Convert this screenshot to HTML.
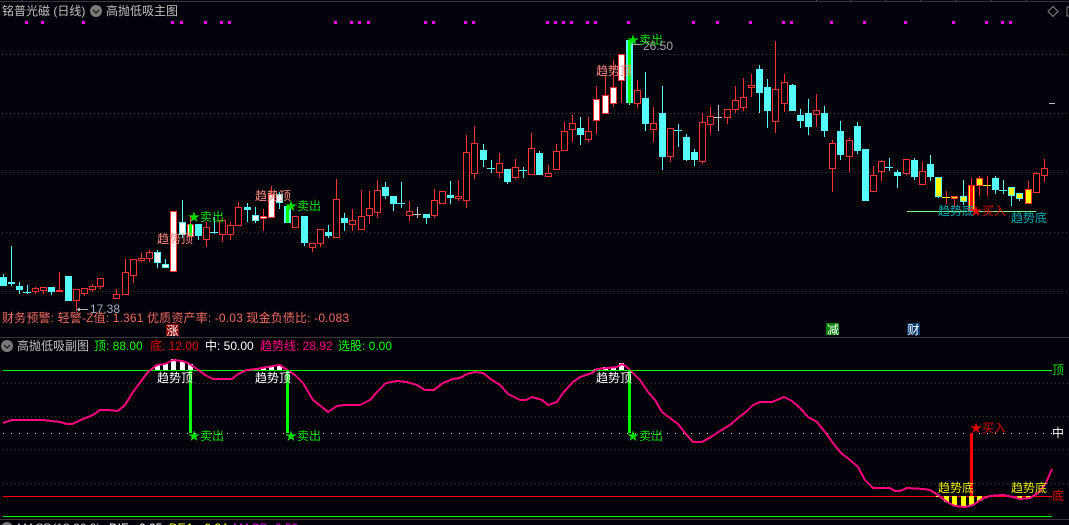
<!DOCTYPE html>
<html><head><meta charset="utf-8"><style>
html,body{margin:0;padding:0;background:#02020a;width:1069px;height:525px;overflow:hidden}
svg{display:block}
text{font-family:"Liberation Sans","WenQuanYi Zen Hei","Noto Sans CJK SC",sans-serif;font-size:12px;white-space:pre}
.c path,.c rect,.c line{shape-rendering:crispEdges}
</style></head><body>
<svg width="1069" height="525" viewBox="0 0 1069 525" xmlns="http://www.w3.org/2000/svg">
<rect width="1069" height="525" fill="#02020a"/>
<g class="c">
<path d="M0 1.500H1069M0 337.500H1069M0 519.500H1069" stroke="#37373c" fill="none"/>
<path d="M22 0v1M816.500 0v1M851 0v1M886 0v1M921 0v1M956 0v1M991 0v1M1026 0v1" stroke="#555"/>
<path d="M2 54.500H1069M2 113.500H1069M2 172.500H1069M2 232.500H1069M2 291.500H1069M3 383.500H1069M3 416.500H1069M3 449.500H1069M3 483.500H1069" stroke="#3a3a3a" stroke-dasharray="1 3" fill="none"/>
<path d="M3 433.500H1052" stroke="#e8e8e8" stroke-dasharray="1 7" fill="none"/>
<path fill="#ff00ff" d="M25 21h3v3h-3zM41 21h3v3h-3zM82 21h3v3h-3zM171 21h3v3h-3zM180 21h3v3h-3zM204 21h3v3h-3zM220 21h3v3h-3zM228 21h3v3h-3zM334 21h3v3h-3zM350 21h3v3h-3zM358 21h3v3h-3zM367 21h3v3h-3zM424 21h3v3h-3zM432 21h3v3h-3zM464 21h3v3h-3zM472 21h3v3h-3zM546 21h3v3h-3zM554 21h3v3h-3zM562 21h3v3h-3zM570 21h3v3h-3zM586 21h3v3h-3zM594 21h3v3h-3zM627 21h3v3h-3zM692 21h3v3h-3zM716 21h3v3h-3zM749 21h3v3h-3zM782 21h3v3h-3zM790 21h3v3h-3zM830 21h3v3h-3zM863 21h3v3h-3zM904 21h3v3h-3zM952 21h3v3h-3zM985 21h3v3h-3zM1001 21h3v3h-3zM1009 21h3v3h-3z"/>
<path fill="none" stroke="#ff3232" d="M35.500 287V294M43.500 287V294M59.500 272V292M76.500 289V311M84.500 288V296M92.500 284V292M100.500 278V289M116.500 289V299M125.500 259V295M133.500 259V283M141.500 253V262M149.500 250V262M206.500 222V247M222.500 220V242M230.500 222V240M238.500 202V225M295.500 216V227M312.500 243V252M320.500 229V247M336.500 179V237M352.500 209V231M361.500 190V229M369.500 191V224M377.500 180V218M409.500 201V221M434.500 189V218M442.500 191V204M458.500 180V201M466.500 135V208M474.500 126V179M499.500 153V178M515.500 159V179M531.500 133V175M548.500 165V177M556.500 144V169M564.500 122V150M572.500 115V142M588.500 117V142M637.500 80V108M653.500 107V142M670.500 128V162M702.500 113V164M710.500 107V134M727.500 109V124M735.500 86V113M743.500 78V111M751.500 74V97M775.500 41V133M784.500 74V112M816.500 94V127M832.500 140V192M849.500 138V172M873.500 166V191M881.500 160V181M906.500 159V175M922.500 162V184M1036.500 172V192M1044.500 159V182M173.500 211V271M190.500 217V236M263.500 209V231M271.500 186V217M596.500 86V134M605.500 76V113M613.500 60V107M621.500 54V103M946.500 191V204M954.500 196V207M971.500 178V210M979.500 176V196M987.500 176V196M1028.500 181V203"/>
<path fill="#02020a" stroke="#ff3232" d="M32.500 288.500h6v3h-6zM40.500 287.500h6v3h-6zM56.500 290.500h6v1h-6zM73.500 289.500h6v11h-6zM81.500 288.500h6v5h-6zM89.500 286.500h6v3h-6zM97.500 278.500h6v8h-6zM113.500 294.500h6v4h-6zM122.500 272.500h6v22h-6zM130.500 259.500h6v16h-6zM138.500 258.500h6v2h-6zM146.500 252.500h6v6h-6zM203.500 227.500h6v12h-6zM219.500 220.500h6v14h-6zM227.500 225.500h6v9h-6zM235.500 207.500h6v18h-6zM292.500 216.500h6v11h-6zM309.500 243.500h6v4h-6zM317.500 229.500h6v14h-6zM333.500 199.500h6v38h-6zM349.500 220.500h6v4h-6zM358.500 216.500h6v13h-6zM366.500 208.500h6v7h-6zM374.500 190.500h6v22h-6zM406.500 211.500h6v4h-6zM431.500 200.500h6v15h-6zM439.500 191.500h6v12h-6zM455.500 196.500h6v2h-6zM463.500 152.500h6v48h-6zM471.500 143.500h6v30h-6zM496.500 163.500h6v9h-6zM512.500 167.500h6v10h-6zM528.500 148.500h6v26h-6zM545.500 173.500h6v3h-6zM553.500 151.500h6v18h-6zM561.500 131.500h6v19h-6zM569.500 123.500h6v6h-6zM585.500 131.500h6v8h-6zM634.500 90.500h6v13h-6zM650.500 123.500h6v6h-6zM667.500 128.500h6v28h-6zM699.500 122.500h6v39h-6zM707.500 116.500h6v8h-6zM724.500 109.500h6v8h-6zM732.500 100.500h6v9h-6zM740.500 97.500h6v10h-6zM748.500 85.500h6v2h-6zM772.500 89.500h6v32h-6zM781.500 82.500h6v21h-6zM813.500 110.500h6v4h-6zM829.500 143.500h6v25h-6zM846.500 140.500h6v16h-6zM870.500 175.500h6v16h-6zM878.500 161.500h6v10h-6zM903.500 159.500h6v14h-6zM919.500 171.500h6v13h-6zM1033.500 173.500h6v19h-6zM1041.500 168.500h6v7h-6z"/>
<path fill="#fff" stroke="#ff3232" d="M170.500 211.500h6v60h-6zM187.500 224.500h6v12h-6zM260.500 216.500h6v2h-6zM268.500 194.500h6v23h-6zM593.500 99.500h6v21h-6zM602.500 95.500h6v18h-6zM610.500 87.500h6v16h-6zM618.500 54.500h6v26h-6z"/>
<path fill="#ffff00" stroke="#ff3232" d="M951.500 196.500h6v2h-6zM968.500 185.500h6v25h-6zM976.500 178.500h6v7h-6zM1025.500 189.500h6v14h-6z"/>
<path fill="none" stroke="#54fcfc" d="M3.500 274V286M11.500 246V286M19.500 282V294M27.500 285V294M23 292.500h8M51.500 287V295M68.500 276V301M157.500 250V268M165.500 259V268M182.500 200V238M198.500 224V240M214.500 217V234M210 232.500h8M247.500 203V222M255.500 207V223M279.500 192V209M287.500 206V223M304.500 216V246M328.500 225V238M344.500 213V231M385.500 182V199M393.500 196V211M401.500 182V208M397 203.500h8M426.500 214V224M450.500 181V204M483.500 144V167M491.500 160V173M487 168.500h8M507.500 169V184M523.500 167V178M519 170.500h8M539.500 151V175M580.500 117V145M629.500 40V105M645.500 72V131M662.500 86V170M678.500 124V147M674 130.500h8M686.500 134V161M694.500 149V166M759.500 65V113M767.500 79V128M792.500 84V111M800.500 109V128M808.500 99V135M824.500 106V137M840.500 121V160M857.500 122V154M865.500 149V201M889.500 158V171M885 167.500h8M897.500 170V188M914.500 158V180M930.500 155V181M938.500 177V198M963.500 180V205M995.500 176V194M1003.500 180V194M999 190.500h8M1011.500 187V206M1019.500 193V201"/>
<path fill="#54fcfc" d="M0 277h7v9h-7zM8 282h7v2h-7zM16 286h7v4h-7zM48 287h7v5h-7zM65 276h7v25h-7zM195 224h7v12h-7zM244 207h7v3h-7zM284 206h7v17h-7zM301 216h7v27h-7zM325 232h7v4h-7zM341 218h7v5h-7zM382 187h7v9h-7zM390 196h7v8h-7zM423 214h7v4h-7zM447 195h7v3h-7zM480 150h7v10h-7zM504 169h7v13h-7zM536 153h7v22h-7zM577 128h7v7h-7zM626 40h7v63h-7zM642 98h7v26h-7zM659 113h7v44h-7zM683 137h7v23h-7zM691 152h7v8h-7zM756 69h7v24h-7zM764 87h7v24h-7zM789 85h7v26h-7zM797 115h7v6h-7zM805 113h7v14h-7zM821 113h7v18h-7zM837 131h7v24h-7zM854 126h7v25h-7zM862 149h7v52h-7zM894 172h7v4h-7zM911 160h7v17h-7zM927 164h7v13h-7zM992 178h7v12h-7z"/>
<path fill="#fff" stroke="#54fcfc" d="M154.500 252.500h6v10h-6zM162.500 264.500h6v3h-6zM179.500 222.500h6v12h-6zM252.500 215.500h6v5h-6zM276.500 194.500h6v8h-6z"/>
<path fill="#ffff00" stroke="#54fcfc" d="M935.500 177.500h6v19h-6zM960.500 196.500h6v5h-6zM1008.500 187.500h6v8h-6zM1016.500 193.500h6v5h-6z"/>
<path d="M417.500 207V218M413 214.500h8M718.500 105V131M714 117.500h8M1049 103.500h6" stroke="#c0c0c0" fill="none"/>
<path d="M942 197.500h8M983 185.500h8" stroke="#ffff00" fill="none"/>
<path fill="#00ff00" d="M189 224h3v12h-3zM286 206h3v17h-3zM628 40h3v63h-3z"/>
<path fill="#ff0000" d="M970 185h3v25h-3z"/>
<path d="M907 211.500H1036" stroke="#80ff80" fill="none"/>
<path d="M77 309.500h11M78.500 308.500h1v2h-1zM632 44.500h10" stroke="#b0b0b0" fill="none"/>
<rect x="166" y="324" width="13" height="12" fill="#8a0000"/>
<rect x="826" y="323" width="13" height="12" fill="#008000"/>
<rect x="907" y="323" width="13" height="12" fill="#0a3a70"/>
<path d="M3 370.500H1052M3 516.500H1052" stroke="#00ff00" fill="none"/>
<path d="M3 496.500H1052" stroke="#ff0000" fill="none"/>
<path fill="#fff" d="M155 365h5v5h-5zM163 364h5v6h-5zM171 359h5v11h-5zM180 361h5v9h-5zM188 364h5v6h-5zM253 369h5v1h-5zM261 368h5v2h-5zM269 366h5v4h-5zM277 365h5v5h-5zM594 369h5v1h-5zM603 367h5v3h-5zM611 368h5v2h-5zM619 363h5v7h-5z"/>
<path fill="#ffff00" d="M936 496h5v1h-5zM944 496h5v6h-5zM952 496h5v10h-5zM961 496h5v11h-5zM969 496h5v9h-5zM977 496h5v5h-5zM985 496h5v1h-5zM1009 496h5v1h-5zM1017 496h5v3h-5zM1026 496h5v3h-5z"/>
<path fill="none" stroke="#ff0080" stroke-width="2" d="M3 423L12 420L43 420L60 422L67 424L72 424L83 419L93 415L100 410L108 410L118 411L125 405L133 392L142 380L148 372L157 365L165 364L173 360L182 361L188 363L197 369L205 375L213 379L232 379L238 374L247 370L257 369L267 367L280 365L287 370L295 375L303 383L313 400L322 407L328 412L337 406L345 405L360 405L370 400L377 392L386 383L397 381L407 382L417 385L425 390L434 390L443 383L453 379L460 378L467 374L475 372L483 373L492 380L500 385L508 394L520 400L526 400L532 397L542 400L548 405L557 402L563 393L573 382L580 377L592 373L597 369L608 368L617 367L622 364L627 367L633 373L640 380L648 392L655 400L662 412L670 418L678 424L685 433L693 442L702 442L711 437L720 431L730 425L738 418L747 411L753 405L760 402L772 402L784 397L792 401L800 408L808 417L817 422L825 432L833 443L841 453L850 460L858 467L865 480L873 488L890 488L895 491L900 491L907 488L923 489L930 490L938 495L947 502L955 506L965 507L973 505L982 499L990 496L1003 495L1013 497L1020 499L1030 498L1038 493L1045 485L1052 469"/>
<path fill="#00ff00" d="M189 370h3v63h-3zM286 370h3v63h-3zM628 370h3v63h-3z"/>
<path fill="#ff0000" d="M970 433h3v63h-3z"/>
<path d="M1053 6.500l5 5l-5 5l-5-5z" fill="none" stroke="#808080" shape-rendering="auto"/>
<path d="M1069 7h-2v9h2" fill="none" stroke="#808080"/>
</g>
<circle cx="96" cy="11" r="6" fill="#7a7a7a"/>
<path d="M93 10l3 3l3-3" fill="none" stroke="#1c1c1c" stroke-width="1.300"/>
<circle cx="7" cy="346" r="6" fill="#7a7a7a"/>
<path d="M4 345l3 3l3-3" fill="none" stroke="#1c1c1c" stroke-width="1.300"/>
<circle cx="7" cy="528" r="6" fill="#7a7a7a"/>

<text x="2" y="15" fill="#c0c0c0">铭普光磁 (日线)</text>
<text x="106" y="15" fill="#c0c0c0">高抛低吸主图</text>

<text x="157" y="243" fill="#ff8a80">趋势顶</text>
<text x="255" y="200" fill="#ff8a80">趋势顶</text>
<text x="596" y="75" fill="#ff8a80">趋势顶</text>
<text x="188" y="221" fill="#00e000">★卖出</text>
<text x="285" y="210" fill="#00e000">★卖出</text>
<text x="627" y="44" fill="#00e000">★卖出</text>
<text x="643" y="50" fill="#a8a8a8">26.50</text>
<text x="90" y="313" fill="#a0b0c0">17.38</text>
<text x="938" y="215" fill="#00a8b0">趋势底</text>
<text x="970" y="215" fill="#e00000">★买入</text>
<text x="1011" y="222" fill="#00a8b0">趋势底</text>
<text x="2" y="322" fill="#f06a60" textLength="347">财务预警: 轻警-Z值: 1.361 优质资产率: -0.03 现金负债比: -0.083</text>
<text x="166.500" y="335" fill="#fff">涨</text>
<text x="827" y="334" fill="#fff">减</text>
<text x="907.500" y="334" fill="#fff">财</text>

<text x="17" y="350" fill="#c0c0c0">高抛低吸副图</text>
<text x="94" y="350" fill="#00ff00">顶: 88.00</text>
<text x="150" y="350" fill="#e00000">底: 12.00</text>
<text x="205" y="350" fill="#ffffff">中: 50.00</text>
<text x="260" y="350" fill="#ff0080">趋势线: 28.92</text>
<text x="338" y="350" fill="#00ff00">选股: 0.00</text>

<text x="157" y="382" fill="#fff">趋势顶</text>
<text x="255" y="382" fill="#fff">趋势顶</text>
<text x="596" y="382" fill="#fff">趋势顶</text>
<text x="188" y="440" fill="#00e000">★卖出</text>
<text x="285" y="440" fill="#00e000">★卖出</text>
<text x="627" y="440" fill="#00e000">★卖出</text>
<text x="970" y="432" fill="#e00000">★买入</text>
<text x="938" y="492" fill="#e8e800">趋势底</text>
<text x="1011" y="492" fill="#e8e800">趋势底</text>
<text x="1052" y="374" fill="#00e000">顶</text>
<text x="1052" y="437" fill="#ffffff">中</text>
<text x="1052" y="500" fill="#e00000">底</text>

<text x="17" y="532" fill="#c0c0c0">MACD(12,26,9)</text>
<text x="109" y="532" fill="#ffffff">DIF: -0.05</text>
<text x="169" y="532" fill="#ffff00">DEA: -0.24</text>
<text x="233" y="532" fill="#ff00ff">MACD: 0.59</text>
</svg>
</body></html>
